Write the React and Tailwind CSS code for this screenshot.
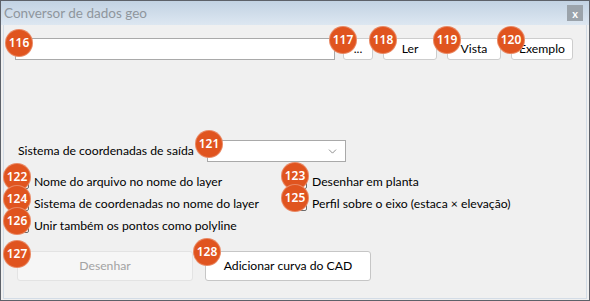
import { ChevronDown } from "lucide-react";

const badges = [
  ["116", 5, 29],
  ["117", 329, 26],
  ["118", 369, 26],
  ["119", 433, 26],
  ["120", 497, 26],
  ["121", 195, 130],
  ["122", 3, 163],
  ["123", 281, 162],
  ["124", 3, 185],
  ["125", 281, 184],
  ["126", 3, 207],
  ["127", 3, 240],
  ["128", 193, 238],
];

function Badge({ label, x, y }) {
  return (
    <div
      className="absolute w-[28px] h-[28px] rounded-full bg-[#e0541f] border border-white/30 flex items-center justify-center text-white text-[12px] font-semibold leading-none"
      style={{ left: x, top: y, fontFamily: '"Noto Sans", sans-serif' }}
    >
      {label}
    </div>
  );
}

function Btn({ children, className = "" }) {
  return (
    <button
      type="button"
      className={`h-[22px] bg-white border border-[#cdcdcd] rounded-[3px] text-[12.2px] text-black flex items-center justify-center ${className}`}
    >
      {children}
    </button>
  );
}

function Check({ label }) {
  return (
    <div className="flex items-center h-[22px]">
      <span className="w-[13px] h-[13px] bg-white border border-[#6b6b6b] rounded-[2px] mr-[5px]" />
      <span>{label}</span>
    </div>
  );
}

export default function App() {
  return (
    <div
      className="relative w-[590px] h-[301px] bg-[#5d6169] p-[1px] text-[12.2px] text-black"
      style={{ fontFamily: 'Lato, "Noto Sans", sans-serif' }}
    >
      <div className="w-full h-full flex flex-col bg-[#f0f0f0]">
        <div className="h-[24px] shrink-0 flex items-center justify-between pl-[3px] pr-[6px] bg-gradient-to-b from-[#c2d2e3] to-[#dde7f1]">
          <span className="text-[13.5px] text-[#8f969d]">Conversor de dados geo</span>
          <span className="w-[16px] h-[16px] bg-[#9ba3ab] text-white text-[11px] font-bold flex items-center justify-center leading-none">
            x
          </span>
        </div>
        <div className="flex-1 mx-[2px] mb-[1px] border-l border-b border-r border-[#d3dce6] flex flex-col">
          <div className="flex items-center pl-[11px] pt-[13px]">
            <div className="w-[320px] h-[22px] bg-white border border-[#a9a9a9]" />
            <Btn className="w-[30px] ml-[8px]">...</Btn>
            <Btn className="w-[54px] ml-[10px]">Ler</Btn>
            <Btn className="w-[54px] ml-[10px]">Vista</Btn>
            <Btn className="w-[62px] ml-[10px]">Exemplo</Btn>
          </div>

          <div className="flex items-center mt-[80px] pl-[14px]">
            <span className="w-[189px]">Sistema de coordenadas de saída</span>
            <div className="w-[139px] h-[22px] bg-white border border-[#a9a9a9] flex items-center justify-end pr-[6px]">
              <ChevronDown size={13} strokeWidth={1.2} className="text-[#555]" />
            </div>
          </div>

          <div className="flex mt-[9px] pl-[12px]">
            <div className="w-[278px] flex flex-col">
              <Check label="Nome do arquivo no nome do layer" />
              <Check label="Sistema de coordenadas no nome do layer" />
              <Check label="Unir também os pontos como polyline" />
            </div>
            <div className="flex flex-col">
              <Check label="Desenhar em planta" />
              <Check label="Perfil sobre o eixo (estaca × elevação)" />
            </div>
          </div>

          <div className="flex mt-[14px] pl-[13px] gap-[12px]">
            <button
              type="button"
              className="w-[176px] h-[30px] bg-[#f6f6f6] border border-[#e3e3e3] rounded-[3px] text-[12.2px] text-[#a3a3a3]"
            >
              Desenhar
            </button>
            <button
              type="button"
              className="w-[166px] h-[30px] bg-white border border-[#c6c6c6] rounded-[3px] text-[12.2px] text-black"
            >
              Adicionar curva do CAD
            </button>
          </div>
        </div>
      </div>
      {badges.map(([l, x, y]) => (
        <Badge key={l} label={l} x={x} y={y} />
      ))}
    </div>
  );
}
